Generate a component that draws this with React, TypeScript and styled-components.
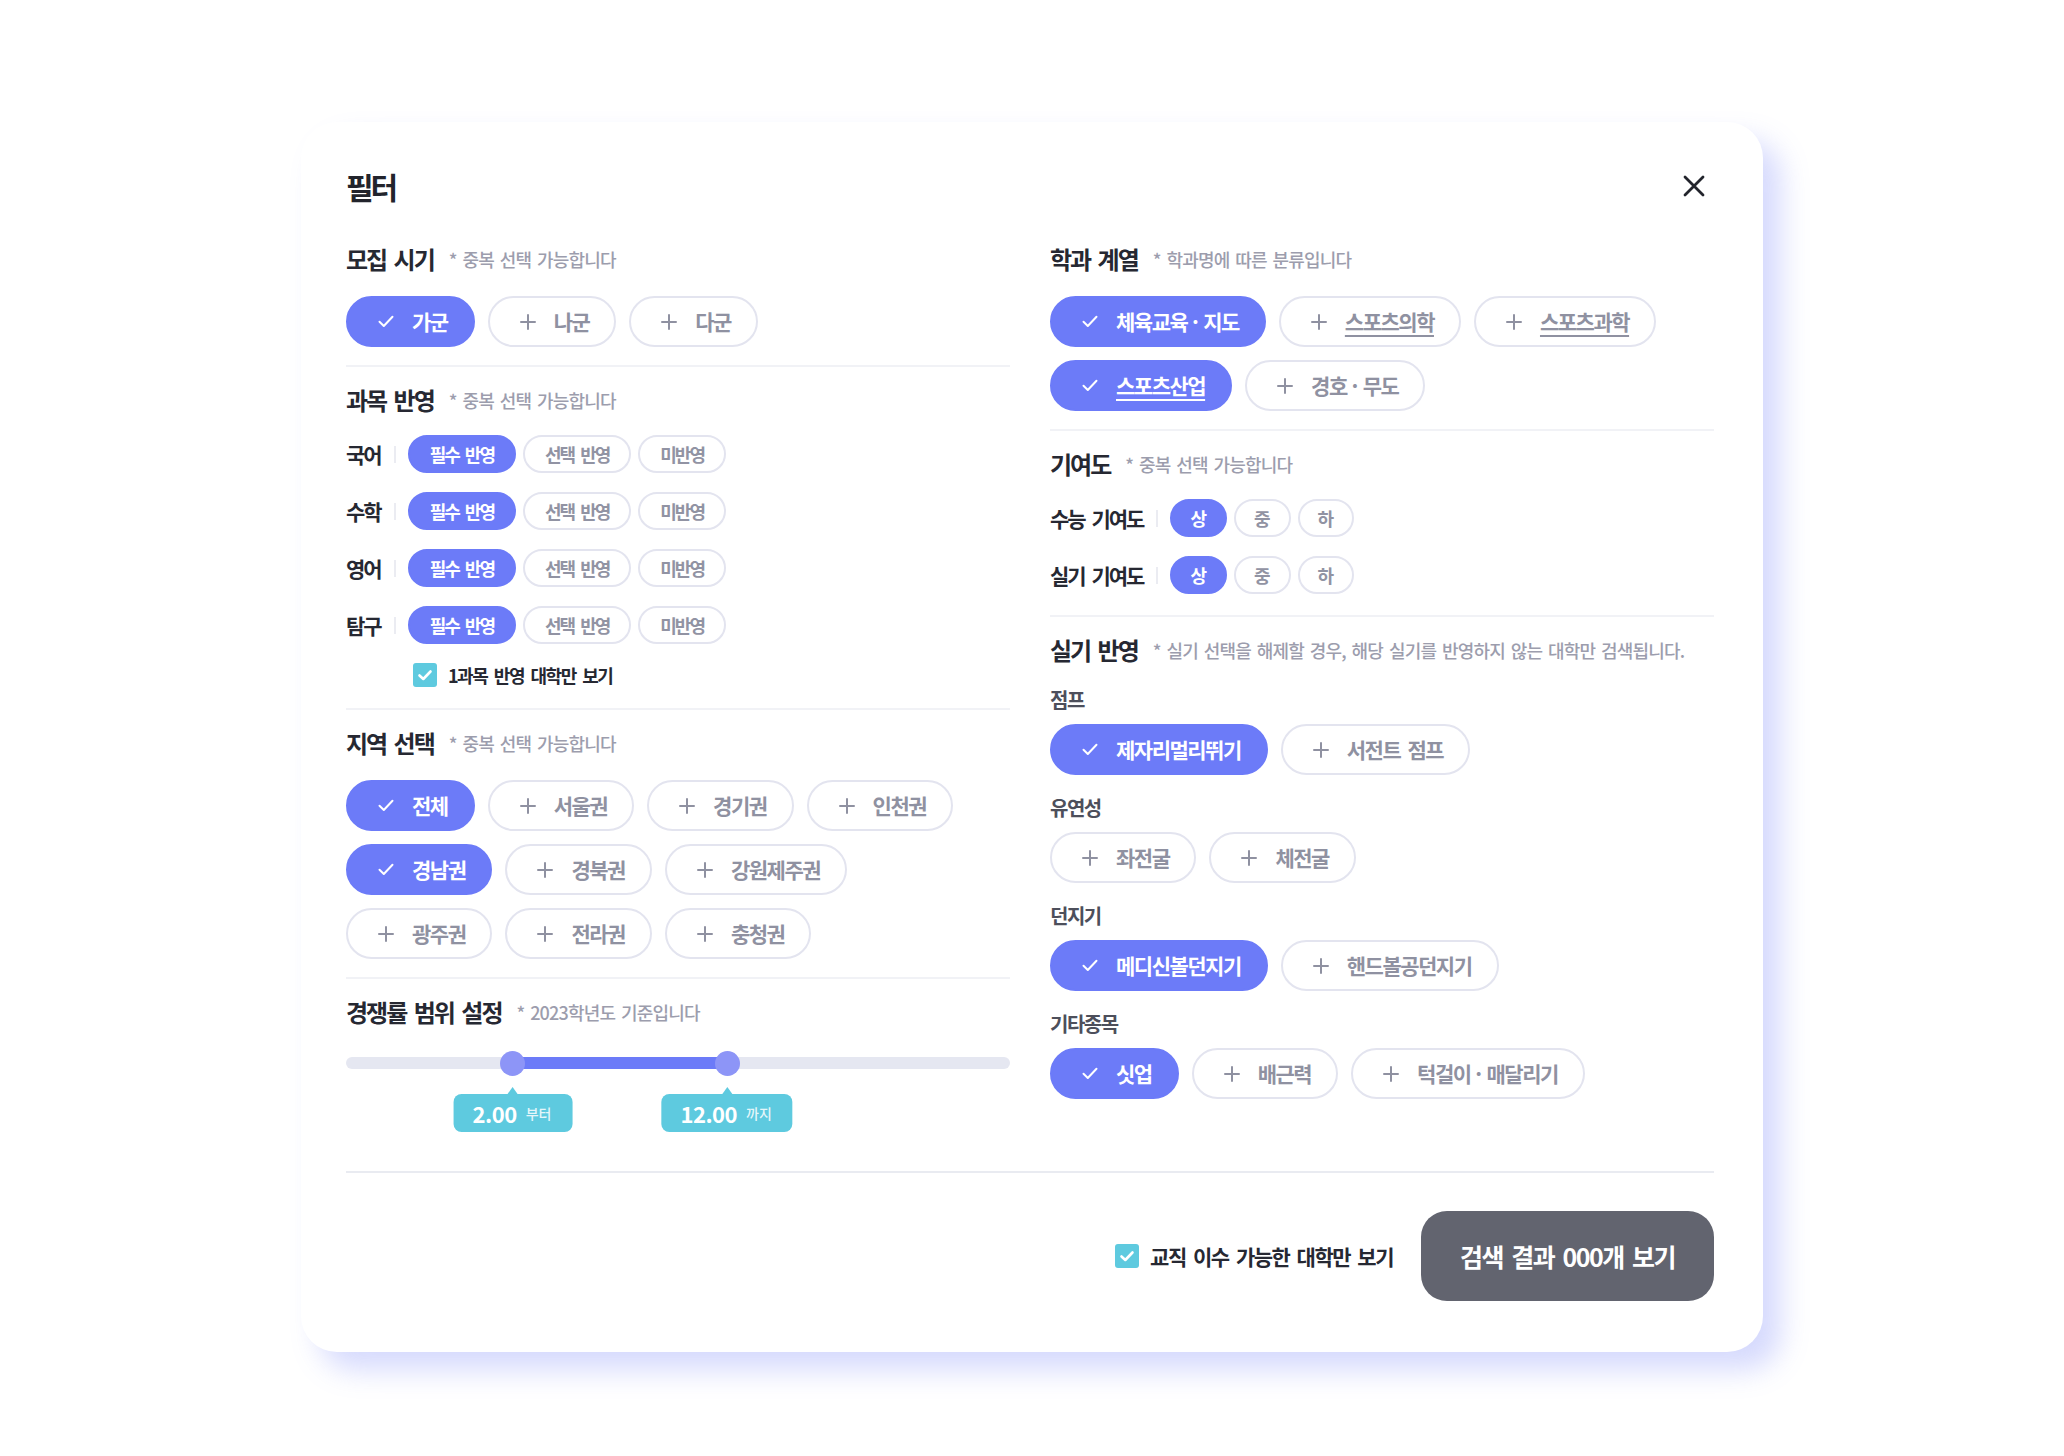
import React from 'react';
import styled, { createGlobalStyle, css } from 'styled-components';

const PRIMARY = '#6c7bf8';
const TEAL = '#5ecadf';
const INK = '#262832';
const MUTED = '#8f91a1';
const LINE = '#e3e4ef';

const GlobalStyle = createGlobalStyle`
  html, body { margin: 0; padding: 0; background: #ffffff; }
  body {
    font-family: "Noto Sans CJK KR", "Noto Sans", sans-serif;
    color: ${INK};
    word-spacing: 4px;
    -webkit-font-smoothing: antialiased;
  }
  * { box-sizing: border-box; }
  button { font-family: inherit; word-spacing: inherit; }
`;

const Page = styled.main`
  width: 2064px;
  min-height: 1456px;
  display: flex;
  justify-content: center;
  align-items: flex-start;
  padding-top: 122px;
`;

const Card = styled.section`
  width: 1462px;
  padding: 44px 49px 51px 45px;
  background: #ffffff;
  border-radius: 36px;
  box-shadow: 18px 18px 28px rgba(108, 123, 248, 0.28);
`;

const Header = styled.header`
  display: flex;
  align-items: center;
  justify-content: space-between;
  height: 40px;
`;

const Title = styled.h1`
  margin: 0;
  font-size: 30px;
  font-weight: 700;
  letter-spacing: -3px;
  line-height: 40px;
  color: #22242c;
`;

const CloseButton = styled.button`
  width: 40px;
  height: 40px;
  display: flex;
  align-items: center;
  justify-content: center;
  padding: 0;
  border: none;
  background: transparent;
  color: #22242c;
  cursor: pointer;
`;

const Columns = styled.div`
  display: grid;
  grid-template-columns: 664px 664px;
  column-gap: 40px;
  margin-top: 20px;
`;

const Column = styled.div`
  display: flex;
  flex-direction: column;
`;

const Section = styled.section<{ $pb?: number }>`
  padding: 18px 0 ${p => p.$pb ?? 18}px;
  border-bottom: 2px solid #f1f2f6;
  &:last-child { border-bottom: none; }
`;

const SectionHead = styled.div`
  display: flex;
  align-items: center;
  gap: 15px;
  height: 30px;
`;

const SectionTitle = styled.h2`
  margin: 0;
  font-size: 24px;
  font-weight: 700;
  letter-spacing: -2px;
  line-height: 30px;
  color: ${INK};
  white-space: nowrap;
`;

const Note = styled.span`
  font-size: 18px;
  font-weight: 500;
  letter-spacing: -0.8px;
  word-spacing: 2.5px;
  color: #9c9dad;
  white-space: nowrap;
`;

const Body = styled.div<{ $gap?: number; $top?: number }>`
  margin-top: ${p => p.$top ?? 22}px;
  display: flex;
  flex-direction: column;
  gap: ${p => p.$gap ?? 13}px;
`;

const ChipRow = styled.div`
  display: flex;
  gap: 13px;
`;

const Chip = styled.button<{ $on?: boolean }>`
  height: 51px;
  display: inline-flex;
  align-items: center;
  gap: 18px;
  padding: 0 25px 0 30px;
  border-radius: 26px;
  border: 2px solid ${p => (p.$on ? PRIMARY : LINE)};
  background: ${p => (p.$on ? PRIMARY : '#ffffff')};
  color: ${p => (p.$on ? '#ffffff' : MUTED)};
  font-size: 21px;
  font-weight: 700;
  letter-spacing: -1.5px;
  white-space: nowrap;
  cursor: pointer;
`;

const ChipText = styled.span<{ $underline?: boolean }>`
  line-height: 1;
  ${p =>
    p.$underline &&
    css`
      text-decoration: underline;
      text-decoration-thickness: 2px;
      text-underline-offset: 5px;
    `}
`;

const Dot = styled.span`
  margin: 0 3px 0 2px;
`;

const LevelRows = styled.div`
  display: flex;
  flex-direction: column;
  gap: 19px;
`;

const LevelRow = styled.div`
  display: flex;
  align-items: center;
  height: 38px;
`;

const RowLabel = styled.span`
  font-size: 21px;
  font-weight: 700;
  letter-spacing: -2px;
  color: ${INK};
  white-space: nowrap;
`;

const RowDivider = styled.span`
  width: 2px;
  height: 17px;
  margin: 0 12px 0 13px;
  background: #ebecf2;
`;

const PillGroup = styled.div`
  display: flex;
  gap: 7px;
`;

const Pill = styled.button<{ $on?: boolean; $compact?: boolean }>`
  height: 38px;
  padding: 0 ${p => (p.$compact ? 18 : 20)}px;
  border-radius: 19px;
  border: 2px solid ${p => (p.$on ? PRIMARY : LINE)};
  background: ${p => (p.$on ? PRIMARY : '#ffffff')};
  color: ${p => (p.$on ? '#ffffff' : '#9193a3')};
  font-size: 18px;
  font-weight: 700;
  letter-spacing: ${p => (p.$compact ? 0 : -2)}px;
  white-space: nowrap;
  cursor: pointer;
`;

const CheckRow = styled.label<{ $indent?: number }>`
  display: flex;
  align-items: center;
  gap: 11px;
  min-height: 30px;
  padding-left: ${p => p.$indent ?? 0}px;
  cursor: pointer;
`;

const CheckBox = styled.span`
  width: 24px;
  height: 24px;
  border-radius: 3px;
  background: ${TEAL};
  display: inline-flex;
  align-items: center;
  justify-content: center;
  flex: none;
`;

const CheckLabel = styled.span<{ $size?: number }>`
  font-size: ${p => p.$size ?? 18}px;
  font-weight: 700;
  letter-spacing: -1.5px;
  color: ${INK};
  white-space: nowrap;
`;

const SubGroups = styled.div`
  display: flex;
  flex-direction: column;
  gap: 20px;
`;

const SubGroup = styled.div`
  display: flex;
  flex-direction: column;
  gap: 11px;
`;

const SubHeading = styled.h3`
  margin: 0;
  font-size: 20px;
  font-weight: 700;
  letter-spacing: -1.5px;
  line-height: 26px;
  color: #4d4f5b;
`;

const Slider = styled.div`
  position: relative;
  height: 86px;
  padding-top: 8px;
`;

const Track = styled.div`
  position: relative;
  height: 12px;
  border-radius: 6px;
  background: #e5e7f1;
`;

const Fill = styled.div`
  position: absolute;
  top: 0;
  bottom: 0;
  background: ${PRIMARY};
`;

const Thumb = styled.span`
  position: absolute;
  top: 50%;
  width: 25px;
  height: 25px;
  margin: -12.5px 0 0 -12.5px;
  border-radius: 50%;
  background: #8d95f7;
`;

const Bubble = styled.div`
  position: absolute;
  top: 37px;
  transform: translateX(-50%);
  height: 38px;
  padding: 0 21px 0 19px;
  border-radius: 8px;
  background: ${TEAL};
  display: flex;
  align-items: center;
  gap: 9px;
  white-space: nowrap;
  &::before {
    content: '';
    position: absolute;
    left: 50%;
    top: -7px;
    margin-left: -5px;
    border-left: 5px solid transparent;
    border-right: 5px solid transparent;
    border-bottom: 7px solid ${TEAL};
  }
`;

const BubbleValue = styled.span`
  font-size: 22px;
  font-weight: 700;
  letter-spacing: -0.5px;
  color: #ffffff;
  line-height: 1;
`;

const BubbleUnit = styled.span`
  font-size: 14px;
  font-weight: 500;
  color: rgba(255, 255, 255, 0.85);
  line-height: 1;
`;

const Footer = styled.footer`
  margin-top: 18px;
  padding-top: 38px;
  border-top: 2px solid #e9ebf1;
  display: flex;
  justify-content: flex-end;
  align-items: center;
  gap: 28px;
`;

const ResultButton = styled.button`
  width: 293px;
  height: 90px;
  border: none;
  border-radius: 26px;
  background: #62646f;
  color: #ffffff;
  font-size: 25px;
  font-weight: 700;
  letter-spacing: -1.5px;
  cursor: pointer;
`;

const CheckMark = ({ color = '#fff' }: { color?: string }) => (
  <svg width="16" height="13" viewBox="0 0 16 13" fill="none">
    <polyline points="1.5,6.8 5.8,11 14.5,1.8" stroke={color} strokeWidth="2" strokeLinecap="round" strokeLinejoin="round" />
  </svg>
);

const PlusMark = () => (
  <svg width="16" height="16" viewBox="0 0 16 16" fill="none">
    <path d="M8 1v14M1 8h14" stroke={MUTED} strokeWidth="2" strokeLinecap="round" />
  </svg>
);

const BoxCheck = () => (
  <svg width="24" height="24" viewBox="0 0 24 24" fill="none">
    <polyline points="6.5,12.5 10.3,16 17.5,8.5" stroke="#fff" strokeWidth="2.6" strokeLinecap="round" strokeLinejoin="round" />
  </svg>
);

const CloseIcon = () => (
  <svg width="24" height="24" viewBox="0 0 24 24" fill="none">
    <path d="M3 3l18 18M21 3L3 21" stroke="currentColor" strokeWidth="2.8" strokeLinecap="round" />
  </svg>
);

type ChipItem = { label: string; on?: boolean; u?: boolean };

const renderLabel = (label: string) => {
  const parts = label.split('·');
  return parts.map((part, i) => (
    <React.Fragment key={i}>
      {i > 0 && <Dot>·</Dot>}
      {part}
    </React.Fragment>
  ));
};

const ChipLine = ({ row }: { row: ChipItem[] }) => (
  <ChipRow>
    {row.map(c => (
      <Chip key={c.label} $on={c.on}>
        {c.on ? <CheckMark /> : <PlusMark />}
        <ChipText $underline={c.u}>{renderLabel(c.label)}</ChipText>
      </Chip>
    ))}
  </ChipRow>
);

const ChipRows = ({ rows }: { rows: ChipItem[][] }) => (
  <Body>
    {rows.map((row, i) => (
      <ChipLine key={i} row={row} />
    ))}
  </Body>
);

const Head = ({ title, note }: { title: string; note: string }) => (
  <SectionHead>
    <SectionTitle>{title}</SectionTitle>
    <Note>{note}</Note>
  </SectionHead>
);

const DUP = '* 중복 선택 가능합니다';

const recruit: ChipItem[][] = [[{ label: '가군', on: true }, { label: '나군' }, { label: '다군' }]];

const subjects = ['국어', '수학', '영어', '탐구'];
const reflect = ['필수 반영', '선택 반영', '미반영'];

const regions: ChipItem[][] = [
  [{ label: '전체', on: true }, { label: '서울권' }, { label: '경기권' }, { label: '인천권' }],
  [{ label: '경남권', on: true }, { label: '경북권' }, { label: '강원제주권' }],
  [{ label: '광주권' }, { label: '전라권' }, { label: '충청권' }],
];

const departments: ChipItem[][] = [
  [{ label: '체육교육·지도', on: true }, { label: '스포츠의학', u: true }, { label: '스포츠과학', u: true }],
  [{ label: '스포츠산업', on: true, u: true }, { label: '경호·무도' }],
];

const contributions = ['수능 기여도', '실기 기여도'];
const levels = ['상', '중', '하'];

const practical: { name: string; row: ChipItem[] }[] = [
  { name: '점프', row: [{ label: '제자리멀리뛰기', on: true }, { label: '서전트 점프' }] },
  { name: '유연성', row: [{ label: '좌전굴' }, { label: '체전굴' }] },
  { name: '던지기', row: [{ label: '메디신볼던지기', on: true }, { label: '핸드볼공던지기' }] },
  { name: '기타종목', row: [{ label: '싯업', on: true }, { label: '배근력' }, { label: '턱걸이·매달리기' }] },
];

const range = { from: 25.15, to: 57.4 };

export default function App() {
  return (
    <>
      <GlobalStyle />
      <Page>
        <Card>
          <Header>
            <Title>필터</Title>
            <CloseButton aria-label="닫기">
              <CloseIcon />
            </CloseButton>
          </Header>

          <Columns>
            <Column>
              <Section>
                <Head title="모집 시기" note={DUP} />
                <ChipRows rows={recruit} />
              </Section>

              <Section>
                <Head title="과목 반영" note={DUP} />
                <Body $gap={16} $top={20}>
                  <LevelRows>
                    {subjects.map(s => (
                      <LevelRow key={s}>
                        <RowLabel>{s}</RowLabel>
                        <RowDivider />
                        <PillGroup>
                          {reflect.map((r, i) => (
                            <Pill key={r} $on={i === 0}>{r}</Pill>
                          ))}
                        </PillGroup>
                      </LevelRow>
                    ))}
                  </LevelRows>
                  <CheckRow $indent={67}>
                    <CheckBox><BoxCheck /></CheckBox>
                    <CheckLabel>1과목 반영 대학만 보기</CheckLabel>
                  </CheckRow>
                </Body>
              </Section>

              <Section>
                <Head title="지역 선택" note={DUP} />
                <ChipRows rows={regions} />
              </Section>

              <Section>
                <Head title="경쟁률 범위 설정" note="* 2023학년도 기준입니다" />
                <Body>
                  <Slider>
                    <Track>
                      <Fill style={{ left: `${range.from}%`, width: `${range.to - range.from}%` }} />
                      <Thumb style={{ left: `${range.from}%` }} />
                      <Thumb style={{ left: `${range.to}%` }} />
                      <Bubble style={{ left: `${range.from}%` }}>
                        <BubbleValue>2.00</BubbleValue>
                        <BubbleUnit>부터</BubbleUnit>
                      </Bubble>
                      <Bubble style={{ left: `${range.to}%` }}>
                        <BubbleValue>12.00</BubbleValue>
                        <BubbleUnit>까지</BubbleUnit>
                      </Bubble>
                    </Track>
                  </Slider>
                </Body>
              </Section>
            </Column>

            <Column>
              <Section>
                <Head title="학과 계열" note="* 학과명에 따른 분류입니다" />
                <ChipRows rows={departments} />
              </Section>

              <Section $pb={21}>
                <Head title="기여도" note={DUP} />
                <Body $top={20}>
                  <LevelRows>
                    {contributions.map(c => (
                      <LevelRow key={c}>
                        <RowLabel>{c}</RowLabel>
                        <RowDivider />
                        <PillGroup>
                          {levels.map((l, i) => (
                            <Pill key={l} $on={i === 0} $compact>{l}</Pill>
                          ))}
                        </PillGroup>
                      </LevelRow>
                    ))}
                  </LevelRows>
                </Body>
              </Section>

              <Section>
                <Head title="실기 반영" note="* 실기 선택을 해제할 경우, 해당 실기를 반영하지 않는 대학만 검색됩니다." />
                <Body>
                  <SubGroups>
                    {practical.map(g => (
                      <SubGroup key={g.name}>
                        <SubHeading>{g.name}</SubHeading>
                        <ChipLine row={g.row} />
                      </SubGroup>
                    ))}
                  </SubGroups>
                </Body>
              </Section>
            </Column>
          </Columns>

          <Footer>
            <CheckRow>
              <CheckBox><BoxCheck /></CheckBox>
              <CheckLabel $size={21}>교직 이수 가능한 대학만 보기</CheckLabel>
            </CheckRow>
            <ResultButton>검색 결과 000개 보기</ResultButton>
          </Footer>
        </Card>
      </Page>
    </>
  );
}
